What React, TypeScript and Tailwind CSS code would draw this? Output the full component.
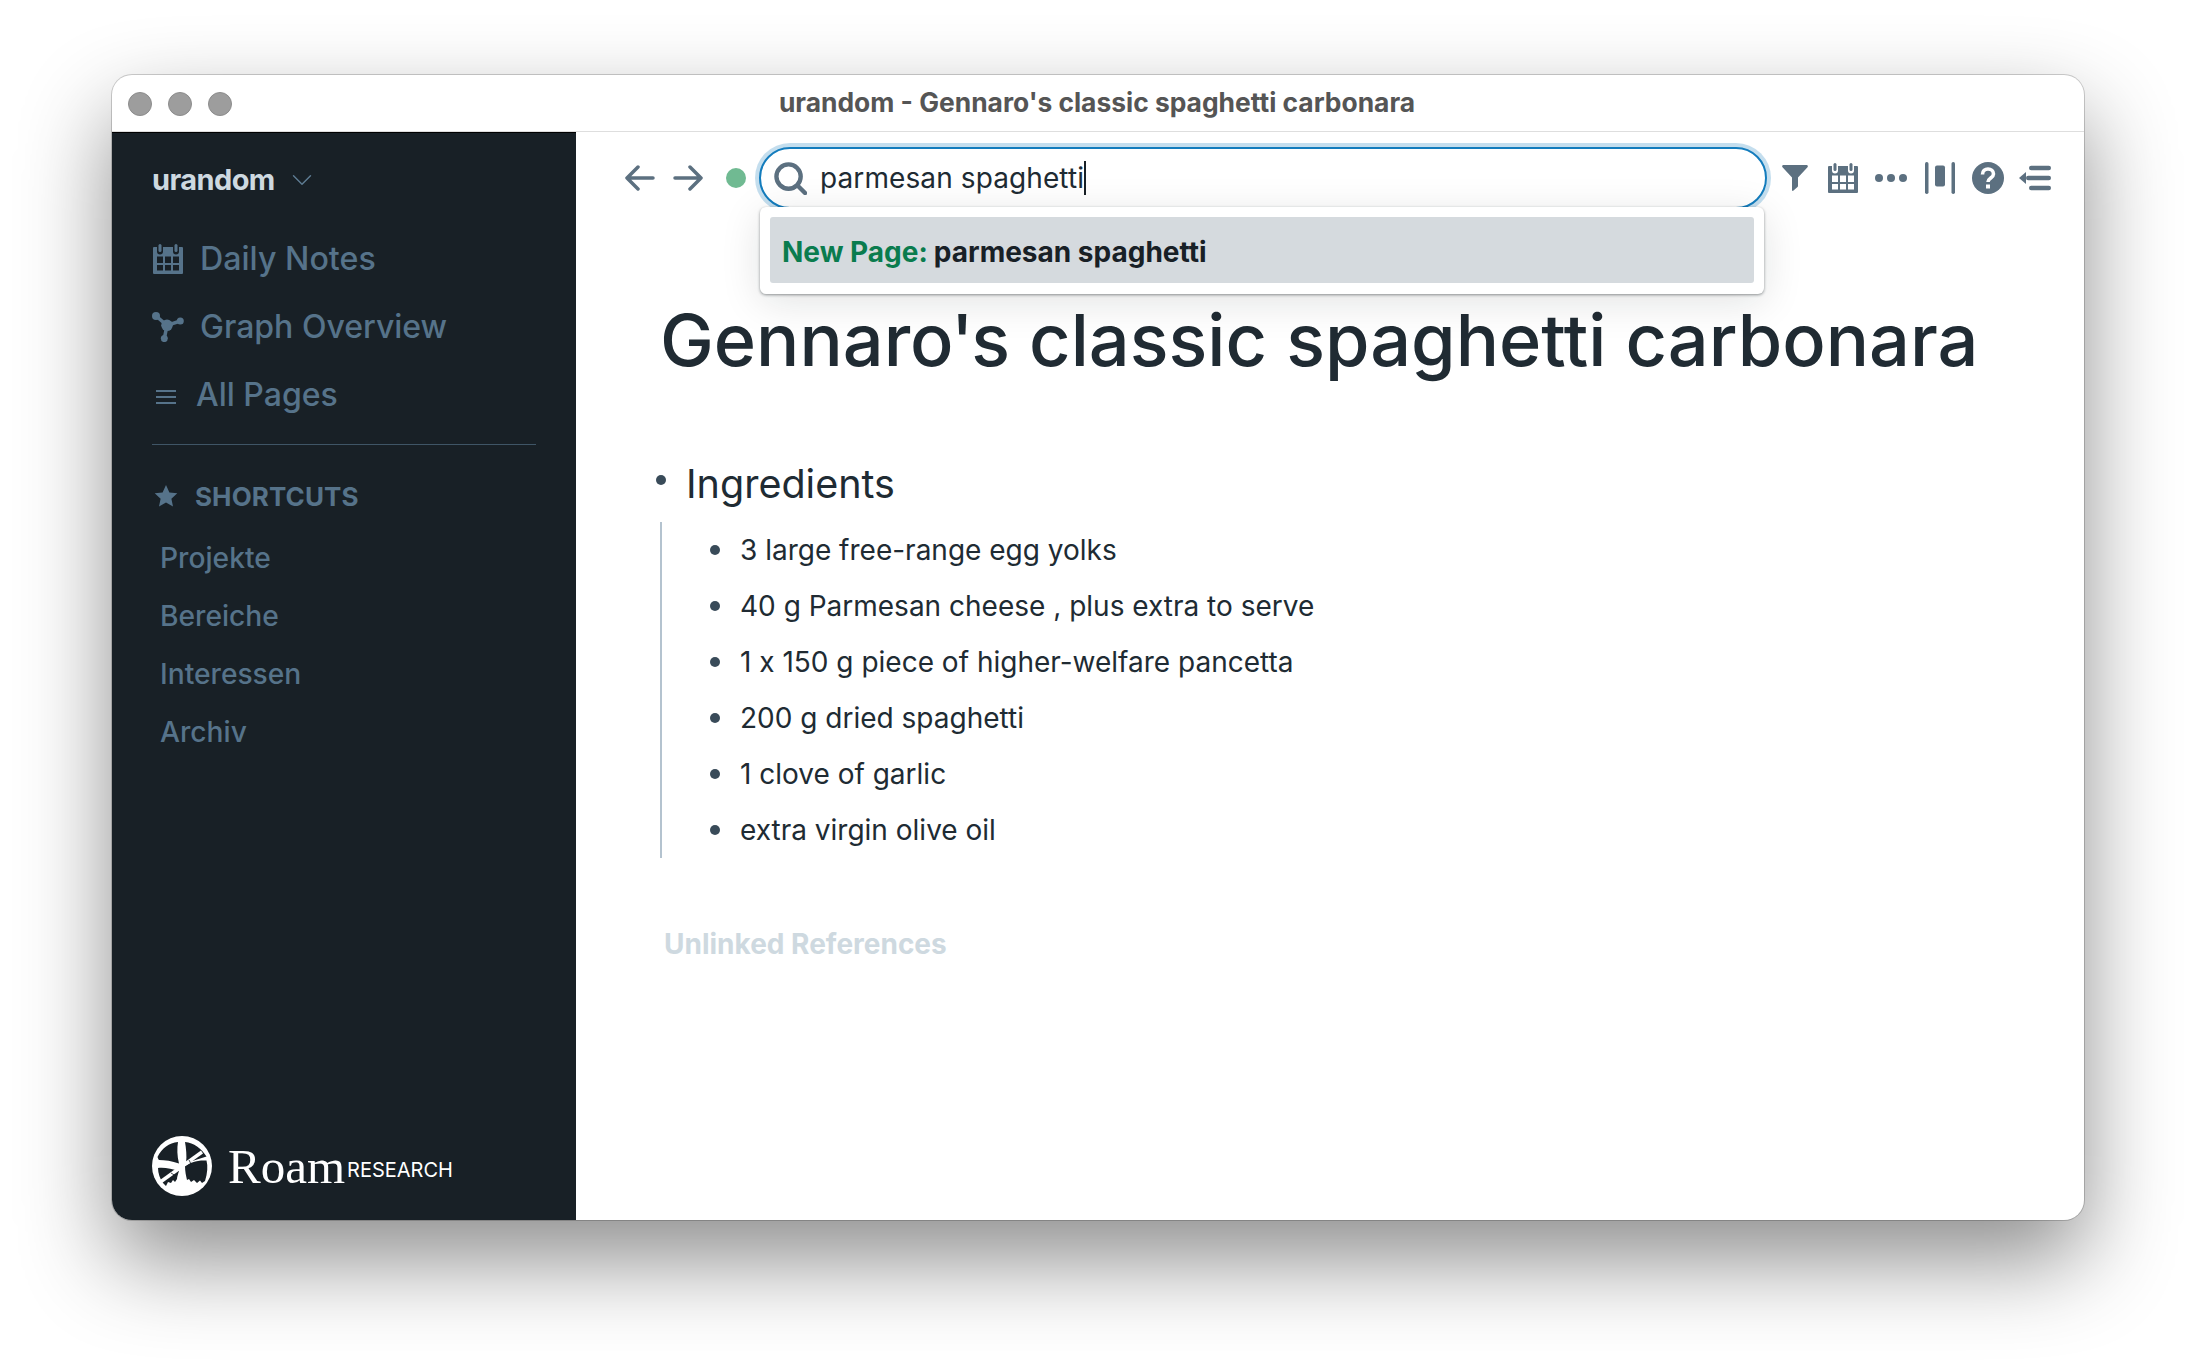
import React from "react";
import { ChevronDown } from "lucide-react";

const calendarPath =
  "M1 3h3v4.500a3 3 0 0 0 6 0V3h10v4.500a3 3 0 0 0 6 0V3h3a1 1 0 0 1 1 1v25a1 1 0 0 1-1 1H1a1 1 0 0 1-1-1V4a1 1 0 0 1 1-1z" +
  "M4 12.500v6.500h6v-6.500zM12 12.500v6.500h6v-6.500zM20 12.500v6.500h6v-6.500zM4 21v5.500h6V21zM12 21v5.500h6V21zM20 21v5.500h6V21z";

const CalendarIcon = ({ className }: { className: string }) => (
  <svg viewBox="0 0 30 30" className={className} fill="currentColor">
    <path fillRule="evenodd" d={calendarPath} />
    <rect x="5.5" y="0" width="3" height="8" rx="1.5" />
    <rect x="21.5" y="0" width="3" height="8" rx="1.5" />
  </svg>
);

const GraphIcon = () => (
  <svg viewBox="0 0 32 30" className="w-8 h-[30px] text-[#56738a]" fill="currentColor" stroke="currentColor">
    <path d="M4 4L15 13.300M15 13.300L28.300 9M15 13.300L12.300 26.600" strokeWidth="3.500" fill="none" />
    <circle cx="4" cy="4" r="4" stroke="none" />
    <circle cx="15" cy="13.300" r="5.800" stroke="none" />
    <circle cx="28.300" cy="9" r="3.500" stroke="none" />
    <circle cx="12.300" cy="26.600" r="3.500" stroke="none" />
  </svg>
);

// drawn from the reference at 3x, lobes sit on a white disc
const RoamLogo = () => (
  <svg viewBox="0 0 60 60" className="w-[60px] h-[60px]">
    <circle cx="30" cy="30" r="30" fill="#fff" />
    <g fill="#182026">
      <path d="M26 6C17 7 10 12 5.500 21C6 22 6 23 7 24C13 24 20 25 27 27.500C25 20 25 12 26 6z" />
      <path d="M33 6C42 7 49 12 54.500 20.500L34 27C35 20 34 12 33 6z" />
      <path d="M6 32C12 31 20 33 27 35C26 38 25 41 25 43L23 46L21 44L19 47L16 46L14 50L11 47C8 43 6 37 6 32z" />
      <path d="M33 30C38 27 44 24 54.500 24.500C56 30 55.500 37 53 45L50 47L48 44.500L45 47L42 44L39 46L37 43L35 44C34 40 33 35 33 30z" />
    </g>
    <path d="M9 45.500L50 16" stroke="#fff" strokeWidth="3.500" fill="none" />
    <path d="M19 37l5 3M37 24l2 4" stroke="#182026" strokeWidth="0.800" fill="none" />
  </svg>
);

const sidebarLinks = ["Projekte", "Bereiche", "Interessen", "Archiv"];

const ingredients = [
  "3 large free-range egg yolks",
  "40 g Parmesan cheese , plus extra to serve",
  "1 x 150 g piece of higher-welfare pancetta",
  "200 g dried spaghetti",
  "1 clove of garlic",
  "extra virgin olive oil",
];

const Sidebar = () => (
  <div className="w-[464px] shrink-0 bg-[#182026] border-t border-black flex flex-col pl-10 pr-10">
    <div className="flex items-center h-[28px] mt-[33px] text-[#ced9e0]">
      <span className="text-[29px] font-bold tracking-[-0.6px]">urandom</span>
      <ChevronDown className="w-[34px] h-[34px] ml-[10px] text-[#5c7a91]" strokeWidth={1} />
    </div>
    <div className="flex items-center gap-[18px] h-[68px] mt-[31px] text-[#56738a]">
      <CalendarIcon className="w-[30px] h-[30px] ml-[1px]" />
      <span className="text-[32.2px] font-medium -ml-[1px]">Daily Notes</span>
    </div>
    <div className="flex items-center gap-[16px] h-[68px] text-[#56738a]">
      <GraphIcon />
      <span className="text-[32px] font-medium">Graph Overview</span>
    </div>
    <div className="flex items-center h-[68px] text-[#56738a]">
      <div className="w-5 ml-1 flex flex-col gap-[4px] mt-1">
        <div className="h-[2px] bg-[#56738a]" />
        <div className="h-[2px] bg-[#56738a]" />
        <div className="h-[2px] bg-[#56738a]" />
      </div>
      <span className="text-[32px] font-medium ml-[20px]">All Pages</span>
    </div>
    <div className="h-px bg-[#3f5566] mt-[15px]" />
    <div className="flex items-center h-[30px] mt-[36px] text-[#56738a]">
      <svg viewBox="0 0 24 24" className="w-6 h-6 ml-[2px]" fill="currentColor">
        <path d="M12 1l3.400 7.400 7.900.9-5.900 5.400 1.600 7.900-7-4-7 4 1.600-7.900L.7 9.300l7.900-.9z" />
      </svg>
      <span className="text-[26px] font-bold ml-[17px] tracking-[0.1px]">SHORTCUTS</span>
    </div>
    <div className="flex flex-col mt-[18px] pl-2">
      {sidebarLinks.map((link) => (
        <div key={link} className="h-[58px] flex items-center text-[28.2px] font-medium text-[#56738a]">
          {link}
        </div>
      ))}
    </div>
    <div className="mt-auto mb-6 flex items-center">
      <RoamLogo />
      <span className="ml-4 text-[#fff] text-[49px] leading-none [font-family:'Liberation_Serif',serif]">Roam</span>
      <span className="ml-[2px] mt-2 text-[20px] text-white">RESEARCH</span>
    </div>
  </div>
);

const Toolbar = () => (
  <div className="h-[92px] shrink-0 flex items-center pl-[49px] text-[#5c7080]">
    <svg viewBox="0 0 30 26" className="w-[30px] h-[26px]" fill="none" stroke="currentColor" strokeWidth="3.500" strokeLinecap="round" strokeLinejoin="round">
      <path d="M2 13h26M13 2L2 13l11 11" />
    </svg>
    <svg viewBox="0 0 30 26" className="w-[30px] h-[26px] ml-[18px]" fill="none" stroke="currentColor" strokeWidth="3.500" strokeLinecap="round" strokeLinejoin="round">
      <path d="M2 13h26M17 2l11 11-11 11" />
    </svg>
    <div className="w-5 h-5 rounded-full bg-[#70ba92] ml-[23px]" />
    <div className="relative ml-[13px] w-[1008px] h-[62px]">
      <div className="h-full rounded-[31px] border-2 border-[#137cbd] shadow-[0_0_0_4px_rgba(19,124,189,0.25)] flex items-center pl-[13px] bg-white">
        <svg viewBox="0 0 34 34" className="w-[33px] h-[33px]" fill="none" stroke="currentColor" strokeWidth="4.500" strokeLinecap="round">
          <circle cx="15" cy="15" r="12.500" />
          <path d="M25 25l7 7" />
        </svg>
        <span className="ml-[13px] text-[28px] tracking-[0.1px] text-[#202b33]">parmesan spaghetti</span>
        <div className="w-[2px] h-[34px] bg-[#182026]" />
      </div>
      <div className="absolute left-[1px] right-[3px] top-[60px] h-[87px] bg-white rounded-[6px] p-[10px] shadow-[0_1px_3px_rgba(16,22,26,0.45),0_8px_40px_rgba(16,22,26,0.12)] z-10">
        <div className="h-[66px] bg-[#d5dade] rounded-[3px] flex items-center px-3 pt-[4px] text-[28px] font-bold">
          <span className="text-[#0a7c4e]">New Page:</span>
          <span className="ml-[6px] text-[#182026]">parmesan spaghetti</span>
        </div>
      </div>
    </div>
    <div className="flex items-center ml-[15px]">
      <svg viewBox="0 0 26 26" className="w-[26px] h-[26px]" fill="currentColor">
        <path d="M1.500 0h23c1.200 0 1.800 1.300 1 2.200L16 12.500V21c0 .5-.2.8-.5 1.100l-4 3.500c-.7.6-1.500.2-1.500-.7V12.500L.5 2.200C-.3 1.300.3 0 1.500 0z" />
      </svg>
      <CalendarIcon className="w-[30px] h-[30px] ml-5" />
      <svg viewBox="0 0 32 8" className="w-8 h-2 ml-[17px]" fill="currentColor">
        <circle cx="4" cy="4" r="4" />
        <circle cx="16" cy="4" r="4" />
        <circle cx="28" cy="4" r="4" />
      </svg>
      <svg viewBox="0 0 30 32" className="w-[30px] h-8 ml-[18px]" fill="currentColor">
        <rect x="0" y="0" width="3.500" height="32" rx="1.700" />
        <rect x="10" y="3.500" width="10" height="21" rx="2" />
        <rect x="26.500" y="0" width="3.500" height="32" rx="1.700" />
      </svg>
      <svg viewBox="0 0 32 32" className="w-8 h-8 ml-[17px]">
        <circle cx="16" cy="16" r="16" fill="currentColor" />
        <path d="M10.500 12.500c0-3.500 2.500-5.500 5.500-5.500s5.500 2 5.500 5c0 4-5.500 4-5.500 8" fill="none" stroke="#fff" strokeWidth="3.600" />
        <rect x="14" y="22.500" width="4" height="4" fill="#fff" />
      </svg>
      <svg viewBox="0 0 32 28" className="w-8 h-7 ml-[15px]" fill="currentColor">
        <path d="M0 14l7-6v12z" />
        <rect x="10" y="1.800" width="22" height="4.400" rx="2.200" />
        <rect x="7" y="11.800" width="25" height="4.400" rx="2.200" />
        <rect x="10" y="21.800" width="22" height="4.400" rx="2.200" />
      </svg>
    </div>
  </div>
);

const Page = () => (
  <div className="flex-1 min-w-0 flex flex-col">
    <Toolbar />
    <div className="pl-[85px]">
      <h1 className="text-[72px] leading-[88px] font-medium text-[#202b33] whitespace-nowrap mt-[72px] -ml-[1px]">
        Gennaro<span className="-mx-[2.5px]">'</span>s classic spaghetti carbonara
      </h1>
      <div className="flex items-start mt-[76px] -ml-[5px]">
        <div className="w-[10px] h-[10px] rounded-full bg-[#394b59] mt-[15px]" />
        <div className="ml-[20px] text-[39.5px] leading-[48px] text-[#202b33]">Ingredients</div>
      </div>
      <div className="-ml-[1px] mt-[14px] border-l-2 border-[#b4c3cf] flex flex-col pl-[48px]">
        {ingredients.map((item) => (
          <div key={item} className="h-14 flex items-center">
            <div className="w-[10px] h-[10px] rounded-full bg-[#394b59]" />
            <span className="ml-[20px] text-[28px] text-[#202b33] [font-feature-settings:'calt'_0]">{item}</span>
          </div>
        ))}
      </div>
      <div className="mt-[65px] ml-[3px] text-[28px] font-bold text-[#ced9e0]">Unlinked References</div>
    </div>
  </div>
);

const App = () => (
  <div className="w-[2196px] h-[1368px] bg-white pt-[75px] pl-[112px] overflow-hidden [font-family:Inter,sans-serif]">
    <div className="w-[1972px] h-[1145px] rounded-[20px] overflow-hidden bg-white flex flex-col shadow-[0_0_0_1px_rgba(0,0,0,0.18),0_40px_90px_rgba(0,0,0,0.45)]">
      <div className="h-[57px] shrink-0 relative flex items-center justify-center border-b border-[#dedede]">
        <div className="absolute left-4 top-[17px] flex gap-4">
          <div className="w-6 h-6 rounded-full bg-[#9d9d9d] border border-[#8c8c8c]" />
          <div className="w-6 h-6 rounded-full bg-[#9d9d9d] border border-[#8c8c8c]" />
          <div className="w-6 h-6 rounded-full bg-[#9d9d9d] border border-[#8c8c8c]" />
        </div>
        <span className="text-[26.4px] font-bold text-[#555] -ml-[2px]">urandom - Gennaro's classic spaghetti carbonara</span>
      </div>
      <div className="flex-1 flex min-h-0">
        <Sidebar />
        <Page />
      </div>
    </div>
  </div>
);

export default App;
